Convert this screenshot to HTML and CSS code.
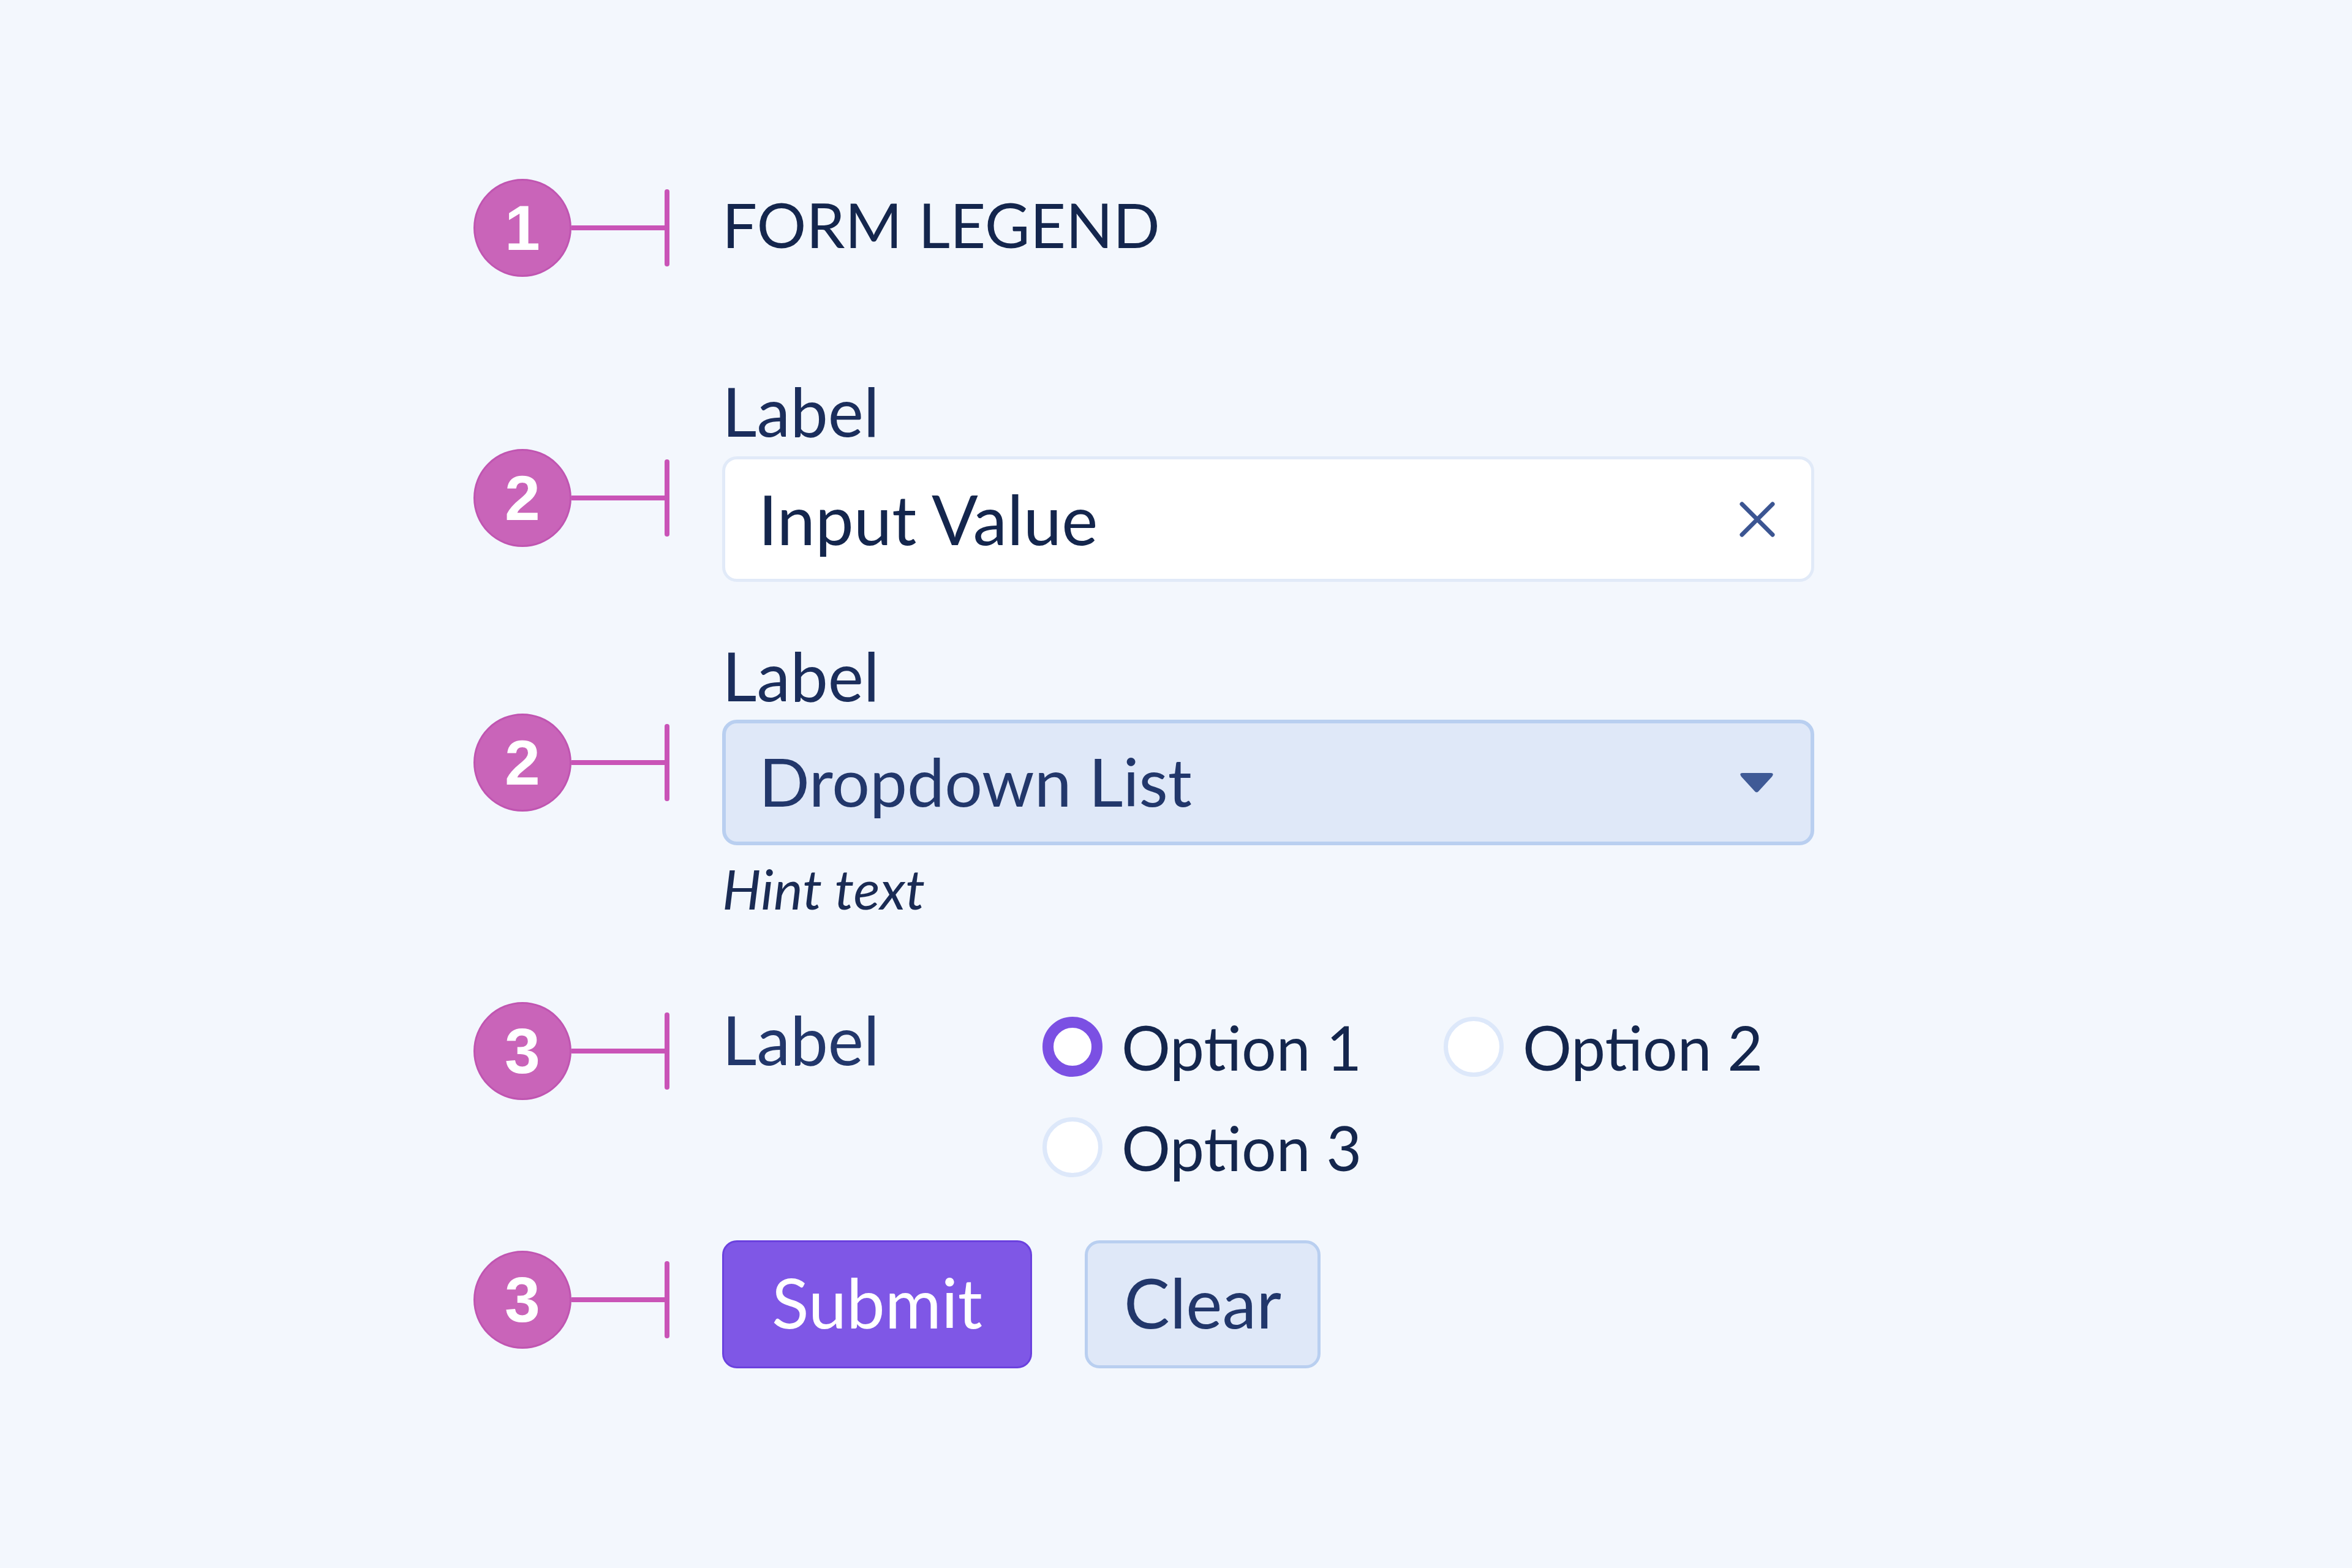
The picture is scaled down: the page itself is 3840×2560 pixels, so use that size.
FILE: index.html
```html
<!DOCTYPE html>
<html lang="en">
<head>
<meta charset="utf-8">
<title>Form anatomy</title>
<link rel="stylesheet" href="styles.css">
</head>
<body>
<main class="sheet">
  <div class="row row-legend">
    <div class="anno"><span class="badge">1</span><span class="wire"></span><span class="tick"></span></div>
    <div class="legend">FORM LEGEND</div>
  </div>

  <div class="row row-input">
    <div class="anno anno-field"><span class="badge">2</span><span class="wire"></span><span class="tick"></span></div>
    <div class="field">
      <div class="label">Label</div>
      <div class="control control-input">
        <span class="value">Input Value</span>
        <svg class="icon-x" viewBox="0 0 60 60" width="60" height="60" aria-hidden="true">
          <path d="M5 5 L55 55 M55 5 L5 55" stroke="#3b5592" stroke-width="7" stroke-linecap="round" fill="none"/>
        </svg>
      </div>
    </div>
  </div>

  <div class="row row-select">
    <div class="anno anno-field"><span class="badge">2</span><span class="wire"></span><span class="tick"></span></div>
    <div class="field">
      <div class="label">Label</div>
      <div class="control control-select">
        <span class="value value-select">Dropdown List</span>
        <svg class="icon-caret" viewBox="0 0 60 36" width="60" height="36" aria-hidden="true">
          <path d="M7 2 H53 Q59 2 55 8 L33 32 Q30 35 27 32 L5 8 Q1 2 7 2 Z" fill="#3f5a96"/>
        </svg>
      </div>
      <div class="hint">Hint text</div>
    </div>
  </div>

  <div class="row row-radio">
    <div class="anno anno-radio"><span class="badge">3</span><span class="wire"></span><span class="tick"></span></div>
    <div class="radio-field">
      <div class="label radio-label">Label</div>
      <div class="radio-grid">
        <div class="option"><span class="radio radio-on"></span><span class="option-text">Option 1</span></div>
        <div class="option"><span class="radio"></span><span class="option-text">Option 2</span></div>
        <div class="option"><span class="radio"></span><span class="option-text">Option 3</span></div>
      </div>
    </div>
  </div>

  <div class="row row-buttons">
    <div class="anno anno-buttons"><span class="badge">3</span><span class="wire"></span><span class="tick"></span></div>
    <div class="buttons">
      <button class="btn btn-primary" type="button">Submit</button>
      <button class="btn btn-secondary" type="button">Clear</button>
    </div>
  </div>
</main>
</body>
</html>
```

FILE: styles.css
```css
html, body {
  margin: 0;
  padding: 0;
}

body {
  background: #f3f7fd;
  font-family: Lato, "Open Sans", "Liberation Sans", sans-serif;
  color: #14264d;
  width: 3840px;
  height: 2560px;
  overflow: hidden;
}

.sheet {
  padding: 292px 0 0 773px;
  display: flex;
  flex-direction: column;
}

.row {
  display: grid;
  grid-template-columns: 320px 1783px;
  column-gap: 86px;
  align-items: start;
}

.row-legend { align-items: center; }
.row-input { margin-top: 152px; }
.row-select { margin-top: 86px; }
.row-radio { margin-top: 126px; }
.row-buttons { margin-top: 92px; }

/* annotation: badge + connector + tick */
.anno {
  display: flex;
  align-items: center;
  width: 320px;
}
.anno-field { margin-top: 129px; }
.anno-radio { margin-top: 6px; }
.anno-buttons { margin-top: 17px; }

.badge {
  flex: 0 0 auto;
  width: 160px;
  height: 160px;
  box-sizing: border-box;
  border-radius: 50%;
  background: #c964b9;
  border: 3px solid #c055b1;
  color: #ffffff;
  font-family: "Liberation Sans", Arial, sans-serif;
  font-weight: 700;
  font-size: 104px;
  line-height: 1;
  display: flex;
  align-items: center;
  justify-content: center;
}

.wire {
  flex: 1 1 auto;
  height: 8px;
  background: #c954b7;
}

.tick {
  flex: 0 0 auto;
  width: 8px;
  height: 126px;
  border-radius: 4px;
  background: #c954b7;
}

.legend {
  font-size: 101px;
  line-height: 1.2;
  color: #14264d;
  margin-bottom: 10px;
}

.label {
  font-size: 110px;
  line-height: 1.2;
  color: #1b2e5c;
}

.control {
  box-sizing: border-box;
  height: 205px;
  border-radius: 24px;
  display: flex;
  align-items: center;
  justify-content: space-between;
  padding: 0 58px 0 54px;
}

.control-input {
  margin-top: 9px;
  background: #ffffff;
  border: 5px solid #e1eaf8;
}

.control-select {
  margin-top: 7px;
  background: #dfe8f8;
  border: 6px solid #b9cff0;
}

.value {
  font-size: 112px;
  line-height: 1.2;
  color: #14264d;
}

.value-select {
  font-size: 109px;
  color: #22376b;
  margin-bottom: 4px;
}

.icon-x { display: block; }
.icon-caret { display: block; }

.hint {
  margin-top: 16px;
  font-size: 90px;
  line-height: 1.2;
  font-style: italic;
  color: #1a2b54;
}

/* radio group */
.radio-field {
  display: flex;
  align-items: flex-start;
}

.radio-label {
  width: 523px;
  flex: 0 0 auto;
  color: #22376b;
}

.radio-grid {
  margin-top: 19px;
  display: grid;
  grid-template-columns: 655px auto;
  row-gap: 44px;
}

.option {
  display: flex;
  align-items: center;
  gap: 31px;
}

.radio {
  flex: 0 0 auto;
  width: 98px;
  height: 98px;
  box-sizing: border-box;
  border-radius: 50%;
  background: #ffffff;
  border: 7px solid #dde8fa;
}

.radio-on {
  border: 18px solid #7b50e3;
}

.option-text {
  font-size: 100px;
  line-height: 1.2;
  color: #14264d;
}

/* buttons */
.buttons {
  display: flex;
  gap: 86px;
}

.btn {
  box-sizing: border-box;
  height: 209px;
  border-radius: 24px;
  font-family: Lato, "Open Sans", "Liberation Sans", sans-serif;
  font-size: 112px;
  line-height: 1;
  padding: 0 0 8px 0;
  cursor: pointer;
}

.btn-primary {
  width: 506px;
  background: #7f57e6;
  border: 3px solid #6b41de;
  color: #ffffff;
}

.btn-secondary {
  width: 385px;
  background: #dfe8f8;
  border: 5px solid #b9cff0;
  color: #22376b;
}
```
